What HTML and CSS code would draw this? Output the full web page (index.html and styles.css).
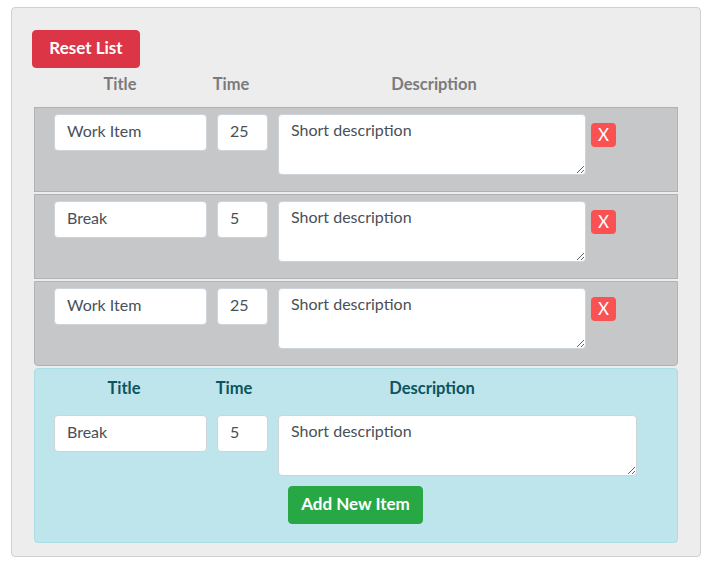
FILE: index.html
```html
<!DOCTYPE html>
<html lang="en">
<head>
<meta charset="utf-8">
<title>Items</title>
<link rel="stylesheet" href="styles.css">
</head>
<body>
<div class="well">
  <button class="btn btn-reset" type="button">Reset List</button>
  <div class="head head-list">
    <span class="c1">Title</span><span class="c2">Time</span><span class="c3">Description</span>
  </div>
  <ul class="list">
    <li class="item">
      <input class="in title" type="text" value="Work Item">
      <input class="in time" type="text" value="25">
      <textarea class="in desc">Short description</textarea>
      <button class="del" type="button">X</button>
    </li>
    <li class="item">
      <input class="in title" type="text" value="Break">
      <input class="in time" type="text" value="5">
      <textarea class="in desc">Short description</textarea>
      <button class="del" type="button">X</button>
    </li>
    <li class="item">
      <input class="in title" type="text" value="Work Item">
      <input class="in time" type="text" value="25">
      <textarea class="in desc">Short description</textarea>
      <button class="del" type="button">X</button>
    </li>
  </ul>
  <div class="add">
    <div class="head head-add">
      <span class="a1">Title</span><span class="a2">Time</span><span class="a3">Description</span>
    </div>
    <div class="add-body">
      <div class="add-row">
        <input class="in title" type="text" value="Break">
        <input class="in time" type="text" value="5">
        <textarea class="in desc desc-wide">Short description</textarea>
      </div>
      <button class="btn btn-add" type="button">Add New Item</button>
    </div>
  </div>
</div>
</body>
</html>
```
FILE: styles.css
```css
* { box-sizing: border-box; }
html, body { margin: 0; padding: 0; background: #ffffff; }
body {
  font-family: Lato, "Open Sans", sans-serif;
  font-size: 16px;
  line-height: 24px;
  color: #212529;
}
.well {
  margin: 7px 0 0 11px;
  width: 690px;
  height: 550px;
  background: #ededed;
  border: 1px solid #d0d0d0;
  border-radius: 4px;
  padding: 22px 21px 13px 20px;
}
.btn {
  display: block;
  height: 38px;
  border: 1px solid transparent;
  border-radius: 4px;
  font-family: Lato, "Open Sans", sans-serif;
  font-weight: 700;
  font-size: 17px;
  line-height: 24px;
  color: #ffffff;
  padding: 5px 0 7px;
  text-align: center;
}
.btn-reset { width: 108px; background: #dc3545; border-color: #dc3545; }
.head {
  display: flex;
  height: 24px;
  font-weight: 700;
  font-size: 16.5px;
  color: #7b7b7b;
}
.head span { display: block; text-align: center; }
.head-list { margin-top: 4px; padding-left: 8px; }
.head-list .c1 { width: 160px; }
.head-list .c2 { width: 62px; }
.head-list .c3 { width: 344px; }
.list {
  list-style: none;
  margin: 11px 0 0 2px;
  padding: 0;
  width: 644px;
}
.item {
  display: flex;
  align-items: flex-start;
  height: 85px;
  background: #c6c7c9;
  border: 1px solid #b1b2b4;
  padding: 6px 0 0 19px;
  margin-bottom: 2px;
}
.item:last-child { border-radius: 0 0 4px 4px; }
.in {
  display: block;
  height: 37px;
  margin: 0;
  border: 1px solid #ced4da;
  border-radius: 4px;
  background: #ffffff;
  font-family: Lato, "Open Sans", sans-serif;
  font-size: 16px;
  line-height: 24px;
  color: #495057;
  padding: 3px 12px 8px;
}
.title { width: 153px; }
.time { width: 51px; margin-left: 10px; }
.desc { width: 308px; height: 61px; margin-left: 10px; }
.desc-wide { width: 359px; }
.del {
  margin: 9px 0 0 5px;
  width: 25px;
  height: 24px;
  padding: 0;
  border: none;
  border-radius: 4px;
  background: #fa5252;
  color: #ffffff;
  font-family: Lato, "Open Sans", sans-serif;
  font-size: 17px;
  line-height: 24px;
  text-align: center;
}
.add {
  margin-left: 2px;
  width: 644px;
  height: 175px;
  background: #bee5eb;
  border: 1px solid #abdde5;
  border-radius: 4px;
  padding-top: 7px;
}
.head-add { color: #0c5460; padding-left: 9px; }
.head-add .a1 { width: 160px; }
.head-add .a2 { width: 60px; }
.head-add .a3 { width: 336px; }
.add-body { padding-left: 19px; }
.add-row { display: flex; align-items: flex-start; margin-top: 15px; }
.btn-add {
  width: 135px;
  margin: 10px 0 0 234px;
  background: #28a745;
  border-color: #28a745;
}
```
